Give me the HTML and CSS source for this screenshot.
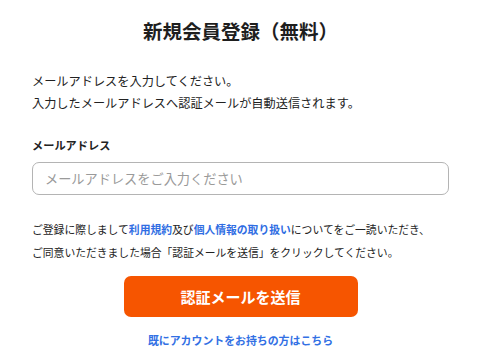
FILE: index.html
```html
<!DOCTYPE html>
<html lang="ja">
<head>
<meta charset="utf-8">
<title>新規会員登録（無料）</title>
<link rel="stylesheet" href="styles.css">
</head>
<body>
<main class="page">
  <h1 class="title">新規会員登録（無料）</h1>
  <p class="lead">メールアドレスを入力してください。<br>入力したメールアドレスへ認証メールが自動送信されます。</p>
  <label class="label" for="email">メールアドレス</label>
  <input class="input" id="email" type="email" placeholder="メールアドレスをご入力ください">
  <p class="terms">ご登録に際しまして<a class="tlink" href="#">利用規約</a>及び<a class="tlink" href="#">個人情報の取り扱い</a>についてをご一読いただき、<br>ご同意いただきました場合「認証メールを送信」をクリックしてください。</p>
  <div class="actions">
    <button class="btn" type="button">認証メールを送信</button>
    <a class="login" href="#">既にアカウントをお持ちの方はこちら</a>
  </div>
</main>
</body>
</html>
```

FILE: styles.css
```css
* { box-sizing: border-box; }
html, body {
  margin: 0;
  padding: 0;
  background: #fff;
}
body {
  font-family: "Noto Sans CJK JP", "Noto Sans", sans-serif;
  color: #222;
}
.page {
  display: flex;
  flex-direction: column;
  padding: 0 31px 0 32px;
}
.title {
  margin: 19px 0 0;
  font-size: 19.5px;
  line-height: 24px;
  font-weight: 700;
  text-align: center;
  color: #1e1e1e;
}
.lead {
  margin: 27px 0 0;
  font-size: 12.2px;
  line-height: 22px;
}
.label {
  margin-top: 22px;
  font-size: 11.2px;
  line-height: 18px;
  font-weight: 700;
}
.input {
  margin-top: 8px;
  height: 33px;
  width: 100%;
  border: 1px solid #b4b4b4;
  border-radius: 7px;
  padding: 0 12px;
  font-family: inherit;
  font-size: 13.2px;
  color: #222;
  outline: none;
}
.input::placeholder { color: #9a9a9a; }
.terms {
  margin: 23px 0 0;
  font-size: 10.8px;
  line-height: 23px;
}
.tlink {
  color: #2f6de3;
  font-weight: 700;
  text-decoration: none;
}
.actions {
  display: flex;
  flex-direction: column;
  align-items: center;
  margin-top: 12px;
}
.btn {
  width: 234px;
  height: 41px;
  border: none;
  border-radius: 7px;
  background: #f65500;
  color: #fff;
  font-family: inherit;
  font-size: 15px;
  font-weight: 700;
  cursor: pointer;
}
.login {
  margin-top: 15px;
  font-size: 10.9px;
  line-height: 16px;
  font-weight: 700;
  color: #3270e4;
  text-decoration: none;
}
```
